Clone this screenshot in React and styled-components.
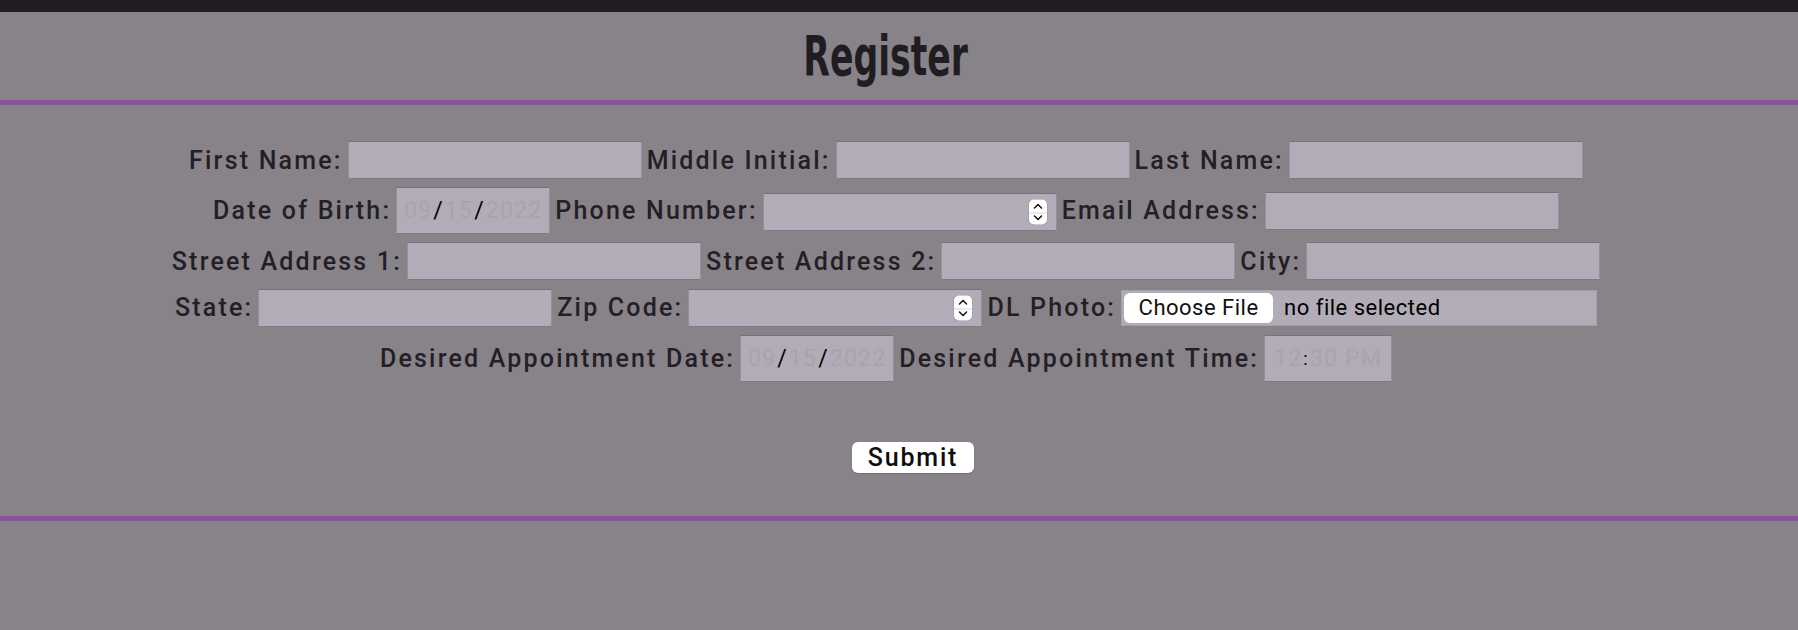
import React from "react";
import styled, { createGlobalStyle } from "styled-components";

const GlobalStyle = createGlobalStyle`
  html, body { margin: 0; padding: 0; }
  body {
    background: #878389;
    font-family: Roboto, "Noto Sans", "DejaVu Sans", sans-serif;
    min-height: 630px;
  }
  * { box-sizing: border-box; }
`;

const TopBar = styled.div`
  height: 12px;
  background: #1f1d21;
`;

const Header = styled.header`
  height: 88px;
  display: flex;
  align-items: center;
  justify-content: center;
  padding-right: 26px;
`;

const Title = styled.h1`
  margin: 0;
  display: inline-block;
  font-family: "DejaVu Sans Condensed", "DejaVu Sans", sans-serif;
  font-stretch: condensed;
  font-weight: 700;
  font-size: 55px;
  line-height: 1;
  color: #201d22;
  transform: scaleX(0.7);
  transform-origin: center;
`;

const Divider = styled.div`
  height: 5px;
  background: #8e4f9c;
`;

const Form = styled.form`
  padding-top: 36px;
  padding-bottom: 43px;
`;

const Rows = styled.div`
  display: flex;
  flex-direction: column;
  align-items: center;
  gap: 8px;
  padding-right: 26px;
`;

const Row = styled.div`
  display: flex;
  align-items: center;
  gap: 5px;
  min-height: 38px;
`;

const Label = styled.label`
  font-size: 25px;
  font-weight: 500;
  letter-spacing: 2.2px;
  color: #231f25;
  white-space: nowrap;
`;

const fieldBox = `
  background: #b2acb8;
  border: 1px solid #948f98;
  border-top-color: #76727b;
  border-bottom-color: #7e7a83;
`;

const TextInput = styled.input`
  ${fieldBox}
  width: 294px;
  height: 38px;
  padding: 0 6px;
  font-family: Roboto, sans-serif;
  font-size: 20px;
  outline: none;
`;

const NumberWrap = styled.div`
  position: relative;
  margin-top: ${(p) => p.$dy || 0}px;
`;

const Spinner = styled.span`
  position: absolute;
  right: 10px;
  top: 50%;
  transform: translateY(-50%);
  width: 18px;
  height: 25px;
  background: #ffffff;
  border-radius: 5px;
  display: flex;
  flex-direction: column;
  align-items: center;
  justify-content: space-between;
  padding: 3px 0;
  box-shadow: 0 0 0 0.5px #9a95a0;
  &::after {
    content: "";
    position: absolute;
    left: 0;
    right: 0;
    top: 50%;
    height: 1px;
    background: #d6d3d9;
  }
`;

const FakeField = styled.div`
  ${fieldBox}
  width: ${(p) => p.$w}px;
  height: ${(p) => p.$h}px;
  display: flex;
  align-items: center;
  justify-content: center;
  font-family: Roboto, sans-serif;
  font-size: 23px;
  letter-spacing: 1.2px;
  color: #a8a3ac;
`;

const Sep = styled.span`
  color: #000000;
  padding: 0 1px;
  font-size: ${(p) => p.$size || 23}px;
`;

const FileBox = styled.div`
  ${fieldBox}
  border-color: #a59fa9;
  width: 476px;
  height: 36px;
  display: flex;
  align-items: center;
  gap: 11px;
  padding-left: 2px;
  font-family: Roboto, sans-serif;
  font-size: 22px;
  letter-spacing: 0.5px;
  color: #000;
`;

const FileButton = styled.span`
  display: inline-flex;
  align-items: center;
  justify-content: center;
  width: 149px;
  height: 30px;
  background: #ffffff;
  border-radius: 6px;
  color: #111;
`;

const SubmitWrap = styled.div`
  display: flex;
  justify-content: center;
  padding-left: 28px;
  margin-top: 60px;
`;

const SubmitButton = styled.button`
  width: 122px;
  height: 31px;
  background: #ffffff;
  border: none;
  border-radius: 6px;
  font-family: Roboto, sans-serif;
  font-size: 25px;
  font-weight: 500;
  letter-spacing: 1.8px;
  color: #0e0e0e;
  padding: 0;
  display: flex;
  align-items: center;
  justify-content: center;
  box-shadow: 0 1px 1px rgba(0,0,0,0.15);
`;

const Chevron = ({ up }) => (
  <svg width="10" height="7" viewBox="0 0 10 7">
    <path
      d={up ? "M1.5 5.5 L5 2 L8.5 5.5" : "M1.5 1.5 L5 5 L8.5 1.5"}
      fill="none"
      stroke="#1a1a1a"
      strokeWidth="1.6"
      strokeLinecap="round"
      strokeLinejoin="round"
    />
  </svg>
);

const NumberField = ({ dy }) => (
  <NumberWrap $dy={dy}>
    <TextInput type="text" />
    <Spinner>
      <Chevron up />
      <Chevron />
    </Spinner>
  </NumberWrap>
);

const DateField = () => (
  <FakeField $w={154} $h={47}>
    09<Sep>/</Sep>15<Sep>/</Sep>2022
  </FakeField>
);

const TimeField = () => (
  <FakeField $w={128} $h={47}>
    12<Sep $size={18}>:</Sep>30 PM
  </FakeField>
);

export default function App() {
  return (
    <>
      <GlobalStyle />
      <TopBar />
      <Header>
        <Title>Register</Title>
      </Header>
      <Divider />
      <Form onSubmit={(e) => e.preventDefault()}>
        <Rows>
          <Row>
            <Label>First Name:</Label>
            <TextInput />
            <Label>Middle Initial:</Label>
            <TextInput />
            <Label>Last Name:</Label>
            <TextInput />
          </Row>
          <Row>
            <Label>Date of Birth:</Label>
            <DateField />
            <Label>Phone Number:</Label>
            <NumberField dy={3} />
            <Label>Email Address:</Label>
            <TextInput />
          </Row>
          <Row>
            <Label>Street Address 1:</Label>
            <TextInput />
            <Label>Street Address 2:</Label>
            <TextInput />
            <Label>City:</Label>
            <TextInput />
          </Row>
          <Row>
            <Label>State:</Label>
            <TextInput />
            <Label>Zip Code:</Label>
            <NumberField dy={1} />
            <Label>DL Photo:</Label>
            <FileBox>
              <FileButton>Choose File</FileButton>
              <span>no file selected</span>
            </FileBox>
          </Row>
          <Row>
            <Label>Desired Appointment Date:</Label>
            <DateField />
            <Label>Desired Appointment Time:</Label>
            <TimeField />
          </Row>
        </Rows>
        <SubmitWrap>
          <SubmitButton type="submit">Submit</SubmitButton>
        </SubmitWrap>
      </Form>
      <Divider />
    </>
  );
}
